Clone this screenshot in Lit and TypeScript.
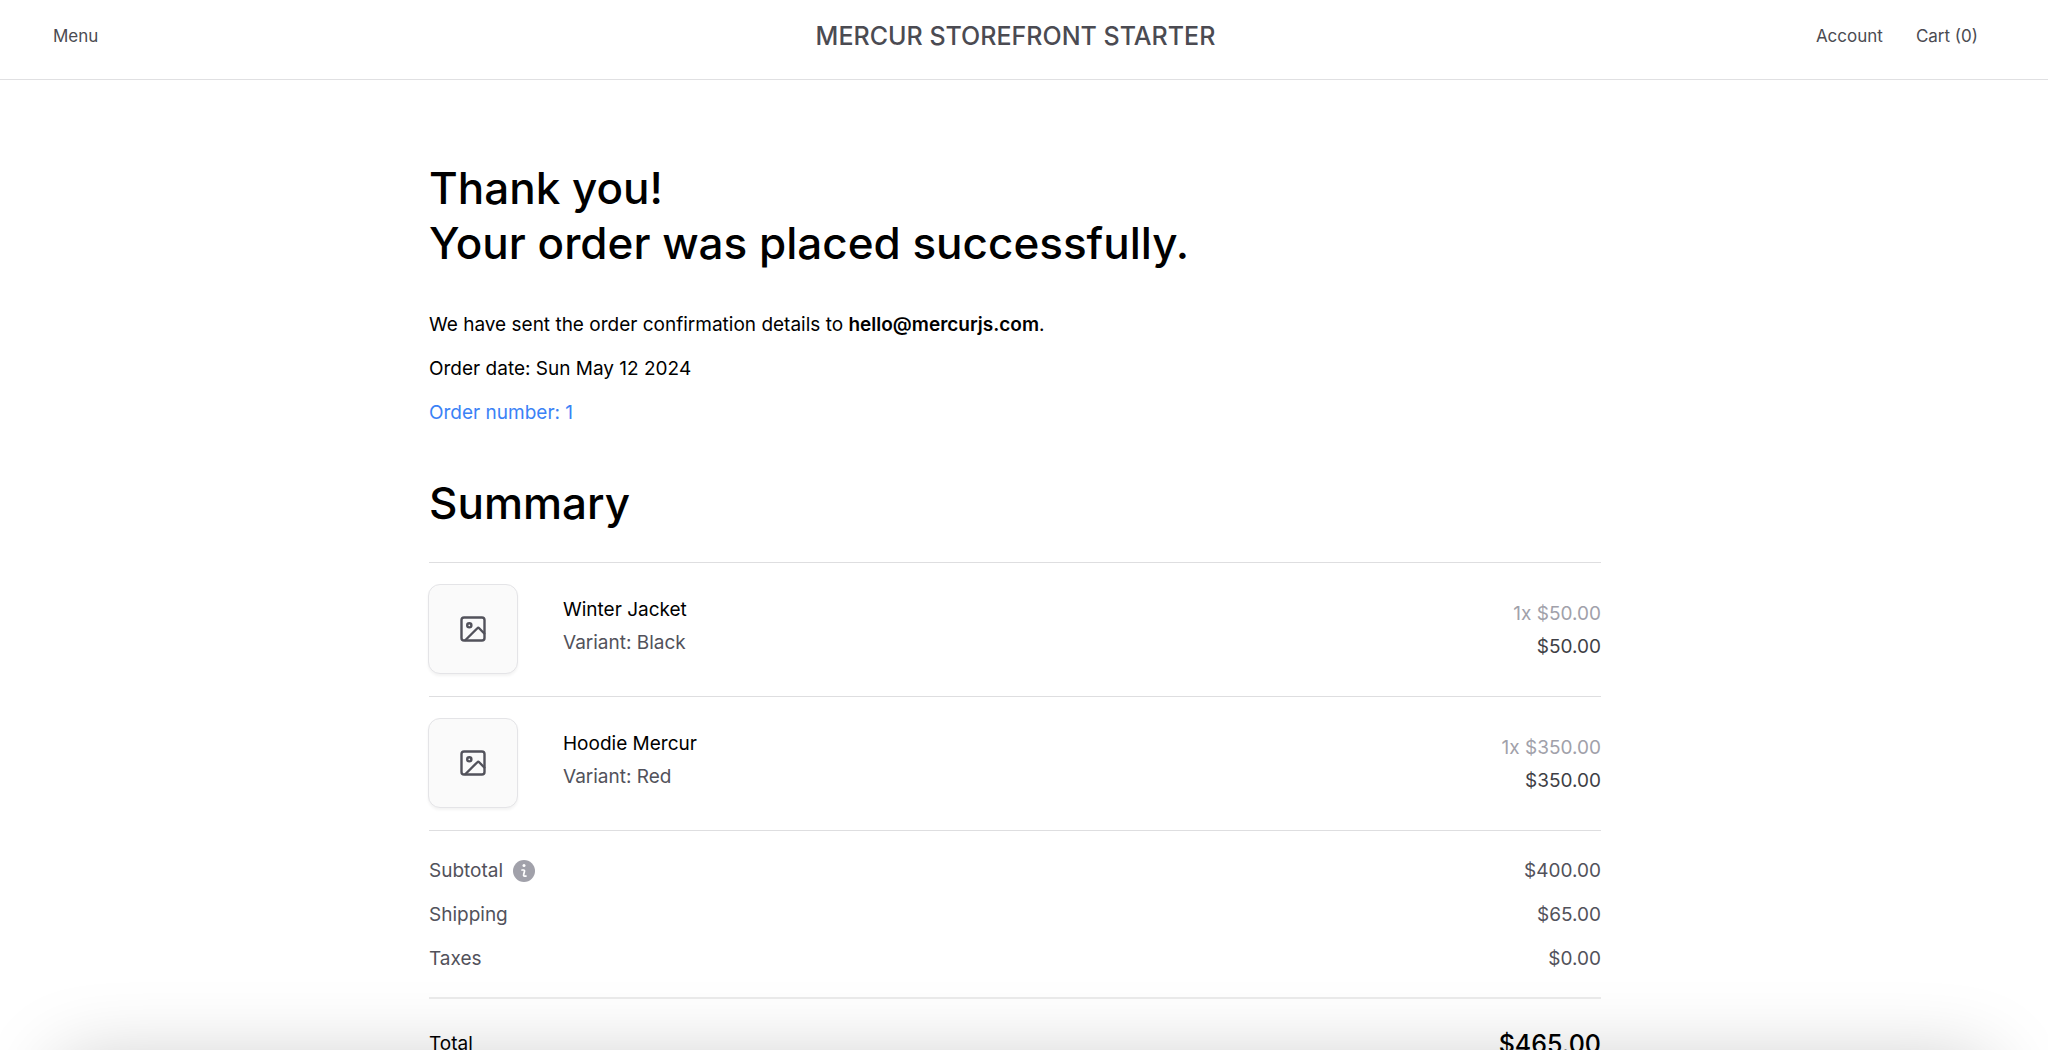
import { LitElement, html, css, svg } from "lit";
import { customElement } from "lit/decorators.js";

interface Item {
  name: string;
  variant: string;
  quantity: number;
  price: number;
}

const items: Item[] = [
  { name: "Winter Jacket", variant: "Black", quantity: 1, price: 50 },
  { name: "Hoodie Mercur", variant: "Red", quantity: 1, price: 350 },
];

const money = (n: number) => `$${n.toFixed(2)}`;

const photoIcon = svg`
  <svg class="photo" viewBox="0 0 28 28" fill="none" stroke="currentColor" stroke-width="2.400" stroke-linecap="round" stroke-linejoin="round" aria-hidden="true">
    <rect x="2.500" y="2.500" width="23" height="23" rx="2.600"></rect>
    <circle cx="10.300" cy="10.300" r="2.100"></circle>
    <path d="M6.500 25 18.600 13a.900.900 0 0 1 1.300 0L25.300 18.500"></path>
  </svg>`;

const infoIcon = svg`
  <svg class="info-icon" viewBox="0 0 22 22" aria-hidden="true">
    <circle cx="11" cy="11" r="11" fill="#a1a1aa"></circle>
    <circle cx="11" cy="5.600" r="1.500" fill="#fff"></circle>
    <path d="M9 10h1.600c.700 0 1.100.600 .900 1.300l-.900 3.500c-.200.700.200 1.300.900 1.300H13" fill="none" stroke="#fff" stroke-width="1.700" stroke-linecap="round"></path>
  </svg>`;

@customElement("app-root")
export class AppRoot extends LitElement {
  static styles = css`
    :host {
      display: block;
      position: relative;
      height: 100vh;
      overflow: hidden;
      background: #fff;
      color: #000;
      font-family: Inter, "Liberation Sans", sans-serif;
      font-size: 19px;
      line-height: 32px;
    }
    a {
      color: inherit;
      text-decoration: none;
    }
    .header {
      display: grid;
      grid-template-columns: 1fr auto 1fr;
      align-items: center;
      padding: 1px 70px 8px 53px;
      height: 70px;
      border-bottom: 1px solid #e0e0e2;
      color: #4b4b52;
      font-size: 17px;
    }
    .menu {
      justify-self: start;
      padding: 0;
      border: 0;
      background: none;
      color: inherit;
      font: inherit;
      cursor: pointer;
    }
    .brand {
      font-size: 25px;
      font-weight: 500;
    }
    .links {
      display: flex;
      justify-content: flex-end;
      gap: 33px;
    }
    .content {
      max-width: 1172px;
      margin: 0 auto;
      padding: 81px 18px 0 0;
    }
    .title {
      margin: 0;
      font-size: 44px;
      font-weight: 500;
      line-height: 55px;
    }
    .details {
      display: flex;
      flex-direction: column;
      align-items: flex-start;
      gap: 12px;
      margin: 38px 0 47px;
    }
    .details p {
      margin: 0;
    }
    .email {
      font-weight: 600;
    }
    .number {
      color: #3b82f6;
    }
    .items {
      list-style: none;
      margin: 31px 0 0;
      padding: 0;
      border-bottom: 1px solid #dedee0;
    }
    .item {
      display: flex;
      gap: 45px;
      padding: 21px 0 22px;
      border-top: 1px solid #dedee0;
      line-height: 33px;
    }
    .thumb {
      display: flex;
      align-items: center;
      justify-content: center;
      box-sizing: border-box;
      width: 90px;
      height: 90px;
      margin-left: -1px;
      border: 1px solid #e4e4e7;
      border-radius: 12px;
      background: #fafafa;
      box-shadow: 0 2px 3px rgba(0, 0, 0, 0.05);
      color: #52525b;
    }
    .photo {
      width: 28px;
      height: 28px;
    }
    .description {
      flex: 1;
      padding-top: 9px;
    }
    .muted {
      color: #52525b;
    }
    .amount {
      padding-top: 13px;
      color: #3f3f46;
      text-align: right;
    }
    .unit {
      color: #a1a1aa;
    }
    .totals {
      display: flex;
      flex-direction: column;
      gap: 12px;
      margin: 0;
      padding: 24px 0 22px;
      color: #52525b;
    }
    .row {
      display: flex;
      justify-content: space-between;
      align-items: center;
    }
    .row dt {
      display: flex;
      align-items: center;
      gap: 10px;
    }
    .row dd {
      margin: 0;
    }
    .info {
      display: flex;
      padding: 0;
      border: 0;
      background: none;
    }
    .info-icon {
      width: 22px;
      height: 22px;
    }
    .grand {
      margin: 0;
      padding: 29px 0;
      border-top: 2px solid #ebebeb;
    }
    .sum {
      font-size: 25px;
      font-weight: 500;
    }
    .shade {
      position: absolute;
      top: 100%;
      left: 60px;
      right: 60px;
      height: 200px;
      box-shadow: 0 12px 80px rgba(0, 0, 0, 0.22);
    }
  `;

  render() {
    const subtotal = items.reduce((s, i) => s + i.quantity * i.price, 0);
    const shipping = 65;
    return html`
      <header class="header">
        <button class="menu" type="button">Menu</button>
        <a class="brand" href="#home">MERCUR STOREFRONT STARTER</a>
        <nav class="links">
          <a href="#account">Account</a>
          <a href="#cart">Cart (0)</a>
        </nav>
      </header>
      <main class="content">
        <h1 class="title">Thank you!<br />Your order was placed successfully.</h1>
        <div class="details">
          <p>We have sent the order confirmation details to <strong class="email">hello@mercurjs.com</strong>.</p>
          <p>Order date: Sun May 12 2024</p>
          <a class="number" href="#order">Order number: 1</a>
        </div>
        <h2 class="title">Summary</h2>
        <ul class="items">
          ${items.map(
            (item) => html`
              <li class="item">
                <div class="thumb">${photoIcon}</div>
                <div class="description">
                  <div>${item.name}</div>
                  <div class="muted">Variant: ${item.variant}</div>
                </div>
                <div class="amount">
                  <div class="unit">${item.quantity}x ${money(item.price)}</div>
                  <div>${money(item.quantity * item.price)}</div>
                </div>
              </li>
            `
          )}
        </ul>
        <dl class="totals">
          <div class="row">
            <dt>Subtotal <button class="info" type="button" aria-label="About the subtotal">${infoIcon}</button></dt>
            <dd>${money(subtotal)}</dd>
          </div>
          <div class="row"><dt>Shipping</dt><dd>${money(shipping)}</dd></div>
          <div class="row"><dt>Taxes</dt><dd>${money(0)}</dd></div>
        </dl>
        <dl class="row grand">
          <dt>Total</dt>
          <dd class="sum">${money(subtotal + shipping)}</dd>
        </dl>
      </main>
      <div class="shade"></div>
    `;
  }
}
